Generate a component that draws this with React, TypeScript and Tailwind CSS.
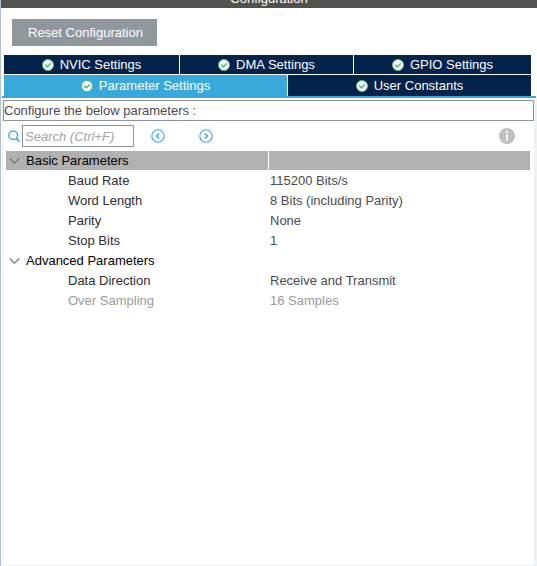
import { useState } from "react";

type Param = { name: string; value: string; disabled?: boolean };
type Group = { title: string; selected?: boolean; params: Param[] };

const groups: Group[] = [
  {
    title: "Basic Parameters",
    selected: true,
    params: [
      { name: "Baud Rate", value: "115200 Bits/s" },
      { name: "Word Length", value: "8 Bits (including Parity)" },
      { name: "Parity", value: "None" },
      { name: "Stop Bits", value: "1" },
    ],
  },
  {
    title: "Advanced Parameters",
    params: [
      { name: "Data Direction", value: "Receive and Transmit" },
      { name: "Over Sampling", value: "16 Samples", disabled: true },
    ],
  },
];

function CheckIcon() {
  return (
    <svg className="size-3 shrink-0" viewBox="0 0 12 12" aria-hidden="true">
      <circle cx="6" cy="6" r="5.5" fill="#fff" stroke="#5cb87f" strokeWidth="1" />
      <path d="M3.1 5.6 5.4 7.9 9 4.3" fill="none" stroke="#5cb87f" strokeWidth="1.5" />
    </svg>
  );
}

function Tab({ label, active, onSelect }: { label: string; active: boolean; onSelect: (label: string) => void }) {
  return (
    <button
      type="button"
      role="tab"
      aria-selected={active}
      onClick={() => onSelect(label)}
      className={`flex min-w-0 items-center justify-center gap-1.5 leading-[19px] text-white ${active ? "bg-[#39a9dc]" : "bg-[#03234b]"}`}
    >
      <CheckIcon />
      {label}
    </button>
  );
}

function CircleArrow({ d, label }: { d: string; label: string }) {
  return (
    <button type="button" aria-label={label}>
      <svg className="size-3.5" viewBox="0 0 14 14" fill="none" stroke="#39a9dc">
        <circle cx="7" cy="7" r="6.2" strokeWidth="1.1" />
        <path d={d} strokeWidth="1.4" />
      </svg>
    </button>
  );
}

export default function App() {
  const [tab, setTab] = useState("Parameter Settings");
  const [query, setQuery] = useState("");
  const [closed, setClosed] = useState<string[]>([]);

  const toggle = (title: string) =>
    setClosed(closed.includes(title) ? closed.filter((t) => t !== title) : [...closed, title]);

  return (
    <div className="flex min-h-screen flex-col overflow-hidden border-l border-[#b4c0ca] bg-white font-['Liberation_Sans',Arial,sans-serif] text-[13px] leading-5 text-[#4b4b4f]">
      <header className="flex h-2 items-end justify-center bg-[#505250] text-white">
        <h1 className="leading-[18px]">Configuration</h1>
      </header>

      <div className="px-[11px] pt-[11px] pb-[9px]">
        <button type="button" className="block h-[27px] bg-[#90989e] pr-3.5 pl-4 text-white">
          Reset Configuration
        </button>
      </div>

      <div role="tablist" className="ml-px mr-px border-b-2 border-[#39a9dc] pr-[5px] pl-0.5">
        <div className="grid h-[19px] grid-cols-[175fr_173fr_177fr] gap-px">
          {["NVIC Settings", "DMA Settings", "GPIO Settings"].map((t) => (
            <Tab key={t} label={t} active={tab === t} onSelect={setTab} />
          ))}
        </div>
        <div className="mt-px grid h-[21px] grid-cols-[283fr_243fr] gap-px">
          {["Parameter Settings", "User Constants"].map((t) => (
            <Tab key={t} label={t} active={tab === t} onSelect={setTab} />
          ))}
        </div>
      </div>

      <main className="ml-px flex grow flex-col border-r-3 border-b border-[#eff1f3] border-l border-l-[#eff1f3] pt-0.5">
        <p className="h-[21px] border border-[#8c959b] leading-[19px]">Configure the below parameters :</p>

        <div className="flex h-[30px] items-center pr-[19px] pl-[5px]">
          <label htmlFor="search" aria-label="Search" className="mr-0.5">
            <svg className="size-3" viewBox="0 0 12 12" fill="none" stroke="#39a9dc">
              <circle cx="5.2" cy="5.2" r="4.3" strokeWidth="1.4" />
              <path d="m8.3 8.3 3.2 3.2" strokeWidth="1.8" />
            </svg>
          </label>
          <input
            id="search"
            type="text"
            value={query}
            onChange={(e) => setQuery(e.target.value)}
            placeholder="Search (Ctrl+F)"
            className="h-[22px] w-28 border border-[#8c959b] px-0.5 outline-none placeholder:text-[#a6a6a6] placeholder:italic"
          />
          <div className="ml-[17px] flex gap-[34px]">
            <CircleArrow label="Previous match" d="M8.2 4.4 5.6 7l2.6 2.6" />
            <CircleArrow label="Next match" d="M5.8 4.4 8.4 7 5.8 9.6" />
          </div>
          <button type="button" aria-label="Information" className="ml-auto">
            <svg className="size-4" viewBox="0 0 16 16">
              <circle cx="8" cy="8" r="8" fill="#c0c0c0" />
              <path d="M7 3h2v2H7zM6.4 6.2H9V13H7.2V7h-.8z" fill="#fff" fillOpacity=".9" />
            </svg>
          </button>
        </div>

        <div className="pr-1 pl-[3px]">
          <table className="w-full table-fixed border-separate border-spacing-0 text-left">
            <colgroup>
              <col className="w-1/2" />
              <col className="w-1/2" />
            </colgroup>
            {groups.map((group) => (
              <tbody key={group.title}>
                <tr className="h-5 text-black">
                  <th
                    scope="rowgroup"
                    className={`border-b border-white p-0 font-normal ${group.selected ? "bg-[#b1b1b1]" : ""}`}
                  >
                    <button
                      type="button"
                      aria-expanded={!closed.includes(group.title)}
                      onClick={() => toggle(group.title)}
                      className="flex h-[19px] w-full items-center gap-1.5 pl-[3px]"
                    >
                      <svg className="h-2 w-[11px]" viewBox="0 0 11 8" fill="none" stroke="#777" strokeWidth="1.2">
                        <path d="m.8 1.5 4.7 4.7 4.7-4.7" />
                      </svg>
                      {group.title}
                    </button>
                  </th>
                  <td className={`border-b border-l border-white p-0 ${group.selected ? "bg-[#b1b1b1]" : ""}`} />
                </tr>
                {!closed.includes(group.title) &&
                  group.params.map((param) => (
                    <tr key={param.name} className={`h-5 ${param.disabled ? "text-[#9b9b9b]" : ""}`}>
                      <th
                        scope="row"
                        className={`p-0 pl-[62px] font-normal ${param.disabled ? "" : "text-[#2e2e33]"}`}
                      >
                        {param.name}
                      </th>
                      <td className="p-0 pl-0.5">{param.value}</td>
                    </tr>
                  ))}
              </tbody>
            ))}
          </table>
        </div>
      </main>
    </div>
  );
}
